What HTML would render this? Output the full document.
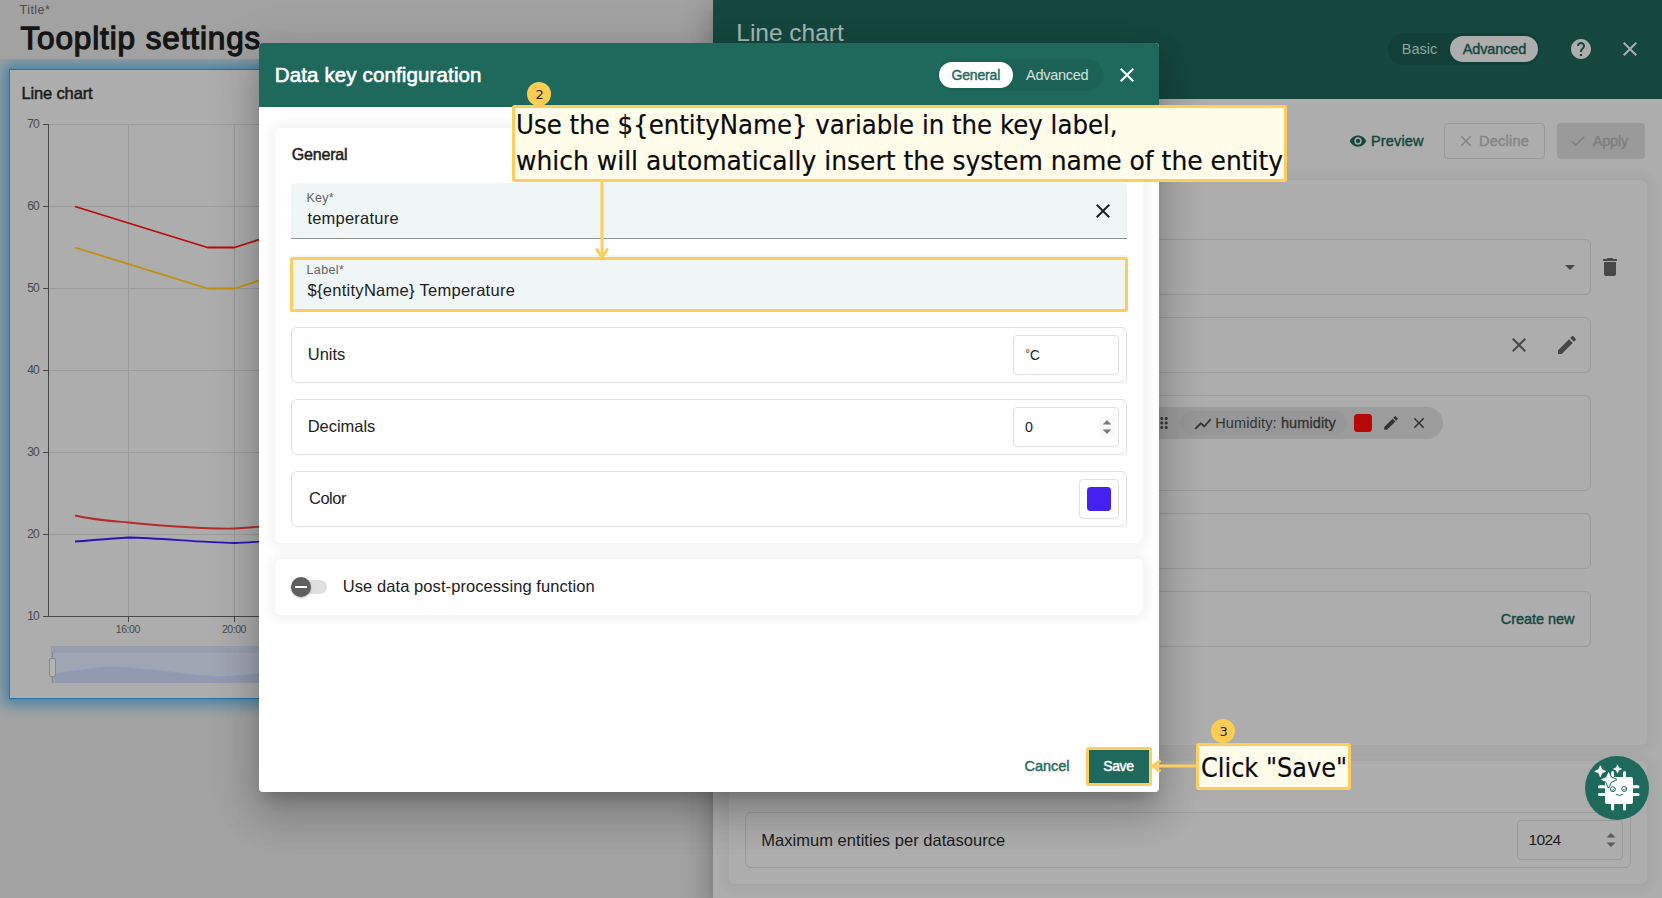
<!DOCTYPE html>
<html lang="en">
<head>
<meta charset="utf-8">
<title>Data key configuration</title>
<style>
*{box-sizing:border-box;margin:0;padding:0}
html,body{width:1662px;height:898px;overflow:hidden}
body{position:relative;background:#a2a2a2;font-family:"Liberation Sans",sans-serif;color:#1b1b1b;font-size:16px}
.a{position:absolute}
.t{position:absolute;white-space:nowrap;line-height:1}
svg{position:absolute;overflow:visible}
.b{font-weight:700}
.dv{font-family:"DejaVu Sans","Liberation Sans",sans-serif}
/* left page (behind backdrop) */
#widget{left:9px;top:10px;width:331px;height:629.5px;background:#adadad;border:1px solid #2b6fa3;box-shadow:0 0 13px 6px #4884a6}
/* right side panel */
#rp{left:713px;top:0;width:949px;height:898px;background:#adadad;box-shadow:0 8px 10px -5px rgba(0,0,0,.2),0 16px 24px 2px rgba(0,0,0,.14),0 6px 30px 5px rgba(0,0,0,.12)}
#rp-tool{left:713px;top:99px;width:949px;height:69px;background:#adadad}
#rp-head{left:713px;top:0;width:949px;height:99px;background:#15473f}
.rcard{background:#adadad;border-radius:6px;box-shadow:0 0 10px 6px rgba(7,12,35,.045)}
.rf{border:1px solid #9b9b9b;border-radius:6px}
/* dialog */
#dlg{left:259px;top:43px;width:900px;height:749px;background:#fff;border-radius:4px;box-shadow:0 11px 15px -7px rgba(0,0,0,.2),0 24px 38px 3px rgba(0,0,0,.14),0 9px 46px 8px rgba(0,0,0,.12)}
#dlg-head{left:259px;top:43px;width:900px;height:64px;background:#1f695c;border-radius:4px 4px 0 0}
.card{background:#fff;border-radius:6px;box-shadow:0 0 10px 6px rgba(11,17,51,.04)}
.row{border:1px solid #e0e0e0;border-radius:6px;background:#fff}
.inp{border:1px solid #e0e0e0;border-radius:4px;background:#fff}
.fld{background:#f0f5f5;border-radius:4px 4px 0 0;border-bottom:1px solid #8c8f8f}
/* annotations */
.note{background:#fffcea;border:3px solid #fdce5f;border-radius:2.5px}
.badge{width:24px;height:24px;border-radius:50%;background:#fdcd53}
</style>
</head>
<body>
<!-- ===== layer 1: dashboard page behind backdrop ===== -->
<div class="a" style="left:0;top:59px;width:700px;height:760px;overflow:hidden"><div class="a" id="widget"></div></div>
<svg width="1662" height="898" viewBox="0 0 1662 898" style="left:0;top:0">
  <g stroke="#9b9b9b" stroke-width="1" fill="none">
    <path d="M48 124.5H341M48 206.5H341M48 288.5H341M48 370.5H341M48 452.5H341M48 534.5H341"/>
    <path d="M128.5 124V616M234.5 124V616"/>
  </g>
  <g stroke="#474747" stroke-width="1" fill="none">
    <path d="M48.5 124V617M43 616.5H341"/>
    <path d="M43 124.5H48M43 206.5H48M43 288.5H48M43 370.5H48M43 452.5H48M43 534.5H48"/>
    <path d="M128.5 617V622M234.5 617V622"/>
  </g>
  <g fill="none" stroke-width="1.8" stroke-linejoin="round">
    <path d="M75 206.5L207.5 247.5L234.5 247.5L340 213.5" stroke="#b90a0c"/>
    <path d="M75 247.5L207.5 288.5L234.5 288.5L340 254.5" stroke="#c2900c"/>
    <path d="M75 515.5C95 520 105 520.5 128.5 522.5C165 526 200 529 234.5 528.5C250 528 262 526 340 520" stroke="#b32c2c"/>
    <path d="M75 541.5C95 540 110 538.5 128.5 537.5C160 538 200 542.5 234.5 543C250 543 262 541 340 536" stroke="#2c14b4"/>
  </g>
  <!-- data zoom -->
  <rect x="51" y="646" width="290" height="37" fill="#a0a5b3"/>
  <rect x="51" y="646" width="290" height="7" fill="#999eae"/>
  <path d="M55 673.5C75 671 95 668 109.5 666.7C150 668 190 676 224 676.7C240 676 250 674 341 665V683H55Z" fill="#9299af"/>
  <path d="M55 673.5C75 671 95 668 109.5 666.7C150 668 190 676 224 676.7C240 676 250 674 341 665" fill="none" stroke="#8d9dc2" stroke-width="1"/>
  <path d="M52.5 652V683" stroke="#868b9a" stroke-width="1.4"/>
  <rect x="49.5" y="658.5" width="6" height="18" rx="1.5" fill="#b3b3b3" stroke="#83878f" stroke-width="1"/>
</svg>

<div class="t" style="left:19.5px;top:4px;font-size:12.5px;color:#4b4b4b;letter-spacing:0.47px;">Title*</div>
<div class="t" style="left:20.4px;top:23px;font-size:31.5px;-webkit-text-stroke:1.26px #151515;color:#151515;letter-spacing:0.879px;">Toopltip settings</div>
<div class="t" style="left:21.5px;top:85px;font-size:16.5px;-webkit-text-stroke:0.49px #1b1b1b;color:#1b1b1b;letter-spacing:-0.153px;">Line chart</div>
<div class="t" style="left:27.3px;top:118px;font-size:12px;color:#4a4a4a;letter-spacing:-0.974px;">70</div>
<div class="t" style="left:27.3px;top:200px;font-size:12px;color:#4a4a4a;letter-spacing:-0.974px;">60</div>
<div class="t" style="left:27.3px;top:282px;font-size:12px;color:#4a4a4a;letter-spacing:-0.974px;">50</div>
<div class="t" style="left:27.3px;top:364px;font-size:12px;color:#4a4a4a;letter-spacing:-0.974px;">40</div>
<div class="t" style="left:27.3px;top:446px;font-size:12px;color:#4a4a4a;letter-spacing:-0.974px;">30</div>
<div class="t" style="left:27.3px;top:528px;font-size:12px;color:#4a4a4a;letter-spacing:-0.974px;">20</div>
<div class="t" style="left:27.3px;top:610px;font-size:12px;color:#4a4a4a;letter-spacing:-0.974px;">10</div>
<div class="t" style="left:115.75px;top:624px;font-size:10.5px;color:#4a4a4a;letter-spacing:-0.422px;">16:00</div>
<div class="t" style="left:222px;top:624px;font-size:10.5px;color:#4a4a4a;letter-spacing:-0.484px;">20:00</div>
<!-- ===== layer 2: widget edit side panel (behind backdrop) ===== -->
<div class="a" id="rp"></div>
<div class="a" id="rp-head"></div>
<div class="a rcard" style="left:729px;top:180px;width:918px;height:565px"></div>
<div class="a rcard" style="left:729px;top:761px;width:918px;height:123px"></div>
<div class="a" style="left:1388px;top:33px;width:152px;height:32px;border-radius:16px;background:#133f39"></div>
<div class="a" style="left:1450px;top:36px;width:88px;height:26px;border-radius:13px;background:#adadad"></div>
<svg width="24" height="24" viewBox="0 0 24 24" style="left:1569.4px;top:37px"><path fill="#adadad" d="M12 2C6.48 2 2 6.48 2 12s4.48 10 10 10 10-4.48 10-10S17.52 2 12 2zm1 17h-2v-2h2v2zm2.07-7.75l-.9.92C13.45 12.9 13 13.5 13 15h-2v-.5c0-1.1.45-2.1 1.17-2.83l1.24-1.26c.37-.36.59-.86.59-1.41 0-1.1-.9-2-2-2s-2 .9-2 2H8c0-2.21 1.79-4 4-4s4 1.79 4 4c0 .88-.36 1.68-.93 2.25z"/></svg>
<svg width="24" height="24" viewBox="0 0 24 24" style="left:1617.5px;top:37px"><path fill="#adadad" d="M19 6.41L17.59 5 12 10.59 6.41 5 5 6.41 10.59 12 5 17.59 6.41 19 12 13.41 17.59 19 19 17.59 13.41 12z"/></svg>
<!-- toolbar buttons -->
<svg width="18" height="18" viewBox="0 0 24 24" style="left:1348.6px;top:132px"><path fill="#15473f" d="M12 4.5C7 4.5 2.73 7.61 1 12c1.73 4.39 6 7.5 11 7.5s9.27-3.11 11-7.5c-1.73-4.39-6-7.5-11-7.5zM12 17c-2.76 0-5-2.24-5-5s2.24-5 5-5 5 2.24 5 5-2.24 5-5 5zm0-8c-1.66 0-3 1.34-3 3s1.34 3 3 3 3-1.34 3-3-1.34-3-3-3z"/></svg>
<div class="a" style="left:1444px;top:123px;width:101px;height:36px;border:1px solid #999;border-radius:4px"></div>
<svg width="18" height="18" viewBox="0 0 24 24" style="left:1456.5px;top:132px"><path fill="#868686" d="M19 6.41L17.59 5 12 10.59 6.41 5 5 6.41 10.59 12 5 17.59 6.41 19 12 13.41 17.59 19 19 17.59 13.41 12z"/></svg>
<div class="a" style="left:1557px;top:123px;width:88px;height:36px;background:#9a9a9a;border-radius:4px"></div>
<svg width="18" height="18" viewBox="0 0 24 24" style="left:1569px;top:132px"><path fill="#7f7f7f" d="M9 16.17L4.83 12l-1.42 1.41L9 19 21 7l-1.41-1.41z"/></svg>
<!-- form fields -->
<div class="a rf" style="left:745px;top:239px;width:846px;height:56px"></div>
<div class="a rf" style="left:745px;top:317px;width:846px;height:56px"></div>
<div class="a rf" style="left:745px;top:395px;width:846px;height:96px"></div>
<div class="a rf" style="left:745px;top:513px;width:846px;height:56px"></div>
<div class="a rf" style="left:745px;top:591px;width:846px;height:56px"></div>
<svg width="24" height="24" viewBox="0 0 24 24" style="left:1558px;top:255px"><path fill="#474747" d="M7 10l5 5 5-5z"/></svg>
<svg width="24" height="24" viewBox="0 0 24 24" style="left:1598.3px;top:255px"><path fill="#474747" d="M6 19c0 1.1.9 2 2 2h8c1.1 0 2-.9 2-2V7H6v12zM19 4h-3.5l-1-1h-5l-1 1H5v2h14V4z"/></svg>
<svg width="24" height="24" viewBox="0 0 24 24" style="left:1506.8px;top:333.2px"><path fill="#474747" d="M19 6.41L17.59 5 12 10.59 6.41 5 5 6.41 10.59 12 5 17.59 6.41 19 12 13.41 17.59 19 19 17.59 13.41 12z"/></svg>
<svg width="24" height="24" viewBox="0 0 24 24" style="left:1555.3px;top:333.2px"><path fill="#474747" d="M3 17.25V21h3.75L17.81 9.94l-3.75-3.75L3 17.25zM20.71 7.04c.39-.39.39-1.02 0-1.41l-2.34-2.34c-.39-.39-1.02-.39-1.41 0l-1.83 1.83 3.75 3.75 1.83-1.83z"/></svg>
<!-- data key chip -->
<div class="a" style="left:1130px;top:407px;width:313px;height:32px;border-radius:16px;background:#9c9c9c"></div>
<div class="a" style="left:1180px;top:411px;width:167px;height:24px;border-radius:12px;background:#979797"></div>
<svg width="18" height="18" viewBox="0 0 24 24" style="left:1155px;top:414.3px"><path fill="#3a3a3a" d="M11 18c0 1.1-.9 2-2 2s-2-.9-2-2 .9-2 2-2 2 .9 2 2zm-2-8c-1.1 0-2 .9-2 2s.9 2 2 2 2-.9 2-2-.9-2-2-2zm0-6c-1.1 0-2 .9-2 2s.9 2 2 2 2-.9 2-2-.9-2-2-2zm6 4c1.1 0 2-.9 2-2s-.9-2-2-2-2 .9-2 2 .9 2 2 2zm0 2c-1.1 0-2 .9-2 2s.9 2 2 2 2-.9 2-2-.9-2-2-2zm0 6c-1.1 0-2 .9-2 2s.9 2 2 2 2-.9 2-2-.9-2-2-2z"/></svg>
<svg width="20" height="20" viewBox="0 0 24 24" style="left:1192.6px;top:413.5px"><path fill="#333" d="M3.5 18.49l6-6.01 4 4L22 6.92l-1.41-1.41-7.09 7.97-4-4L2 16.99z"/></svg>
<div class="a" style="left:1354px;top:414px;width:18.3px;height:18.3px;border-radius:3.5px;background:#b50808"></div>
<svg width="18" height="18" viewBox="0 0 24 24" style="left:1382px;top:414.3px"><path fill="#333" d="M3 17.25V21h3.75L17.81 9.94l-3.75-3.75L3 17.25zM20.71 7.04c.39-.39.39-1.02 0-1.41l-2.34-2.34c-.39-.39-1.02-.39-1.41 0l-1.83 1.83 3.75 3.75 1.83-1.83z"/></svg>
<svg width="18" height="18" viewBox="0 0 24 24" style="left:1410px;top:413.8px"><path fill="#333" d="M19 6.41L17.59 5 12 10.59 6.41 5 5 6.41 10.59 12 5 17.59 6.41 19 12 13.41 17.59 19 19 17.59 13.41 12z"/></svg>
<!-- data settings row -->
<div class="a rf" style="left:745px;top:812px;width:886px;height:56px"></div>
<div class="a rf" style="left:1517px;top:820px;width:106px;height:40px;border-radius:4px"></div>
<svg width="10" height="16" viewBox="0 0 10 16" style="left:1605.7px;top:832px"><path fill="#5a5a5a" d="M0.5 5.5L5 1l4.5 4.5zM0.5 10.5L5 15l4.5-4.5z"/></svg>

<div class="t" style="left:736.3px;top:21px;font-size:24.5px;color:#a9b9b6;letter-spacing:-0.021px;">Line chart</div>
<div class="t" style="left:1401.75px;top:42px;font-size:14.5px;color:#8ea5a1;letter-spacing:0.011px;">Basic</div>
<div class="t" style="left:1462.75px;top:42px;font-size:14.5px;-webkit-text-stroke:0.43px #15473f;color:#15473f;letter-spacing:-0.133px;">Advanced</div>
<div class="t" style="left:1371px;top:134px;font-size:14.5px;-webkit-text-stroke:0.43px #15473f;color:#15473f;letter-spacing:0.15px;">Preview</div>
<div class="t" style="left:1479px;top:134px;font-size:14.5px;-webkit-text-stroke:0.43px #868686;color:#868686;letter-spacing:0.243px;">Decline</div>
<div class="t" style="left:1592.75px;top:134px;font-size:14.5px;-webkit-text-stroke:0.43px #7f7f7f;color:#7f7f7f;letter-spacing:-0.193px;">Apply</div>
<div class="t" style="left:1215.2px;top:416px;font-size:14.5px;color:#333;letter-spacing:0.124px;">Humidity: <span style="-webkit-text-stroke:.35px">humidity</span></div>
<div class="t" style="left:1500.75px;top:612px;font-size:14.5px;-webkit-text-stroke:0.43px #15473f;color:#15473f;letter-spacing:-0.048px;">Create new</div>
<div class="t" style="left:761.3px;top:832px;font-size:16.5px;color:#1b1b1b;letter-spacing:0.029px;">Maximum entities per datasource</div>
<div class="t" style="left:1528.4px;top:832px;font-size:15.5px;color:#1b1b1b;letter-spacing:-0.554px;">1024</div>
<!-- ===== layer 3: data key configuration dialog ===== -->
<div class="a" id="dlg"></div>
<div class="a" id="dlg-head"></div>
<div class="a" style="left:937px;top:59px;width:166px;height:32px;border-radius:16px;background:#1d6256"></div>
<div class="a" style="left:939px;top:62px;width:74px;height:26px;border-radius:13px;background:#fff"></div>
<svg width="24" height="24" viewBox="0 0 24 24" style="left:1115px;top:63px"><path fill="#fff" d="M19 6.41L17.59 5 12 10.59 6.41 5 5 6.41 10.59 12 5 17.59 6.41 19 12 13.41 17.59 19 19 17.59 13.41 12z"/></svg>
<div class="a card" style="left:275px;top:127.5px;width:868px;height:415px"></div>
<div class="a card" style="left:275px;top:559px;width:868px;height:56px"></div>
<!-- key field -->
<div class="a fld" style="left:291px;top:183px;width:836px;height:56px"></div>
<svg width="24" height="24" viewBox="0 0 24 24" style="left:1091.2px;top:199.2px"><path fill="#222" d="M19 6.41L17.59 5 12 10.59 6.41 5 5 6.41 10.59 12 5 17.59 6.41 19 12 13.41 17.59 19 19 17.59 13.41 12z"/></svg>
<!-- label field (highlighted) -->
<div class="a fld" style="left:291px;top:255px;width:836px;height:56px;border-bottom:0"></div>
<!-- rows -->
<div class="a row" style="left:291px;top:327px;width:836px;height:56px"></div>
<div class="a inp" style="left:1013px;top:335px;width:106px;height:40px"></div>
<div class="a row" style="left:291px;top:399px;width:836px;height:56px"></div>
<div class="a inp" style="left:1013px;top:407px;width:106px;height:40px"></div>
<div class="a" style="left:1099.5px;top:416.5px;width:15.5px;height:20.5px;background:#f9f9f9"></div>
<svg width="10" height="16" viewBox="0 0 10 16" style="left:1102.2px;top:418.9px"><path fill="#7d7d7d" d="M0.6 5.4L5 1l4.4 4.4zM0.6 10.6L5 15l4.4-4.4z"/></svg>
<div class="a row" style="left:291px;top:471px;width:836px;height:56px"></div>
<div class="a inp" style="left:1079px;top:479px;width:40px;height:40px"></div>
<div class="a" style="left:1087px;top:487px;width:24px;height:24px;border-radius:3.5px;background:#4421ee"></div>
<!-- slide toggle -->
<div class="a" style="left:295px;top:580px;width:31.5px;height:13.7px;border-radius:7px;background:#e0e0e0"></div>
<div class="a" style="left:291.2px;top:577.2px;width:20px;height:20px;border-radius:50%;background:#5f5f5f;box-shadow:0 1px 2px rgba(0,0,0,.28)"></div>
<div class="a" style="left:295.2px;top:586.3px;width:12px;height:1.8px;background:#fff"></div>
<!-- save button -->
<div class="a" style="left:1089px;top:750px;width:60px;height:33.5px;background:#1f695c"></div>

<div class="t" style="left:274.75px;top:65px;font-size:20.5px;-webkit-text-stroke:0.61px #fff;color:#fff;letter-spacing:0.132px;">Data key configuration</div>
<div class="t" style="left:951.4px;top:68px;font-size:14px;-webkit-text-stroke:0.42px #1f695c;color:#1f695c;letter-spacing:-0.149px;">General</div>
<div class="t" style="left:1026px;top:68px;font-size:14.5px;color:#d2e1de;letter-spacing:-0.261px;">Advanced</div>
<div class="t" style="left:291.75px;top:147px;font-size:16px;-webkit-text-stroke:0.48px #212121;color:#212121;letter-spacing:-0.186px;">General</div>
<div class="t" style="left:306.5px;top:192px;font-size:12.5px;color:#5f6363;letter-spacing:0.237px;">Key*</div>
<div class="t" style="left:307.4px;top:210px;font-size:16.5px;color:#212121;letter-spacing:0.222px;">temperature</div>
<div class="t" style="left:306.5px;top:264px;font-size:12.5px;color:#5f6363;letter-spacing:0.383px;">Label*</div>
<div class="t" style="left:307.5px;top:282px;font-size:16.5px;color:#212121;letter-spacing:0.284px;">${entityName} Temperature</div>
<div class="t" style="left:307.75px;top:346px;font-size:16.5px;color:#212121;letter-spacing:-0.023px;">Units</div>
<div class="t" style="left:307.75px;top:418px;font-size:16.5px;color:#212121;letter-spacing:-0.049px;">Decimals</div>
<div class="t" style="left:309px;top:490px;font-size:16.5px;color:#212121;letter-spacing:-0.484px;">Color</div>
<div class="t" style="left:342.75px;top:578px;font-size:16.5px;color:#212121;letter-spacing:0.077px;">Use data post-processing function</div>
<div class="t" style="left:1025.6px;top:347px;font-size:15.5px;color:#212121;letter-spacing:0px;"><span style="font-size:11px;position:relative;top:-3.4px;margin-right:.3px">°</span><span style="display:inline-block;transform:scaleX(.88);transform-origin:0 0">C</span></div>
<div class="t" style="left:1025.3px;top:419px;font-size:15.5px;color:#212121;letter-spacing:0px;transform:scaleX(.92);transform-origin:0 0;">0</div>
<div class="t" style="left:1024.5px;top:759px;font-size:14.5px;-webkit-text-stroke:0.43px #1f695c;color:#1f695c;letter-spacing:-0.033px;">Cancel</div>
<div class="t" style="left:1103.25px;top:759px;font-size:14px;-webkit-text-stroke:0.42px #fff;color:#fff;letter-spacing:-0.375px;">Save</div>
<!-- ===== layer 4: AI assistant button + tutorial annotations ===== -->
<svg width="64" height="64" viewBox="0 0 64 64" style="left:1585px;top:756px">
  <circle cx="32" cy="32" r="32" fill="#1f695c"/>
  <g stroke="#fff" stroke-width="3" stroke-linecap="round">
    <path d="M27.6 16.5V22M39.5 16.5V22M27.6 48V53M39.5 48V53M14.5 30.7H20M14.5 38.5H20M48 30.7H53M48 38.5H53"/>
  </g>
  <rect x="20" y="21" width="28" height="27" rx="2" fill="#fff"/>
  <path fill="#fff" stroke="#fff" stroke-width=".6" stroke-linejoin="round" d="M15.3 9.7L16.98 13.62L20.9 15.3L16.98 16.98L15.3 20.9L13.62 16.98L9.7 15.3L13.62 13.62Z"/>
  <path fill="#fff" stroke="#fff" stroke-width=".6" stroke-linejoin="round" d="M32.5 8.9L33.73 11.77L36.6 13L33.73 14.23L32.5 17.1L31.27 14.23L28.4 13L31.27 11.77Z"/>
  <path fill="#1f695c" stroke="#1f695c" stroke-width="2.4" stroke-linejoin="round" d="M23.6 16.4L25.76 21.44L30.8 23.6L25.76 25.76L23.6 30.8L21.44 25.76L16.4 23.6L21.44 21.44Z"/>
  <path fill="#fff" stroke="#fff" stroke-width=".6" stroke-linejoin="round" d="M23.6 16.4L25.76 21.44L30.8 23.6L25.76 25.76L23.6 30.8L21.44 25.76L16.4 23.6L21.44 21.44Z"/>
  <circle cx="27.9" cy="33.2" r="2.5" fill="#fff" stroke="#1f695c" stroke-width="1"/>
  <circle cx="39.2" cy="33" r="2.5" fill="#fff" stroke="#1f695c" stroke-width="1"/>
  <path d="M26.5 33.5l1.2 1 1.6-2M38 33.3l1.2 1 1.6-2" fill="none" stroke="#1f695c" stroke-width=".8"/>
  <path d="M31 38.5q3.4 2.2 6.8 0" fill="none" stroke="#1f695c" stroke-width="1" stroke-linecap="round"/>
</svg>
<!-- step 2 -->
<div class="a" style="left:290px;top:257px;width:838.3px;height:54.5px;border:3px solid #fdce5f;border-radius:2.5px"></div>
<div class="a note" style="left:511.5px;top:105px;width:775.5px;height:76.6px"></div>
<div class="a badge" style="left:527px;top:82.3px"></div>
<svg width="20" height="80" viewBox="0 0 20 80" style="left:592.3px;top:180px"><path d="M10 0V77M4.2 68.5L10 77.5L15.8 68.5" fill="none" stroke="#fdce5f" stroke-width="3" stroke-linejoin="miter"/></svg>
<!-- step 3 -->
<div class="a" style="left:1085.8px;top:746.7px;width:66.7px;height:39.5px;border:3px solid #fdce5f;border-radius:2.5px"></div>
<div class="a note" style="left:1196px;top:743px;width:154.5px;height:46.5px"></div>
<div class="a badge" style="left:1211px;top:719.3px"></div>
<svg width="50" height="20" viewBox="0 0 50 20" style="left:1150px;top:755.5px"><path d="M47 10H3M10.5 4.6L2.5 10L10.5 15.4" fill="none" stroke="#fdce5f" stroke-width="3"/></svg>

<div class="t" style="left:515.65px;top:112px;font-size:26.5px;font-family:'DejaVu Sans','Liberation Sans',sans-serif;color:#0a0a0a;letter-spacing:0px;-webkit-text-stroke:.2px #0a0a0a;transform:scaleX(0.924);transform-origin:0 0;">Use the ${entityName} variable in the key label,</div>
<div class="t" style="left:515.56px;top:148px;font-size:26.5px;font-family:'DejaVu Sans','Liberation Sans',sans-serif;color:#0a0a0a;letter-spacing:0px;-webkit-text-stroke:.2px #0a0a0a;transform:scaleX(0.9431);transform-origin:0 0;">which will automatically insert the system name of the entity</div>
<div class="t" style="left:1201.39px;top:755px;font-size:26.5px;font-family:'DejaVu Sans','Liberation Sans',sans-serif;color:#0a0a0a;letter-spacing:0px;-webkit-text-stroke:.2px #0a0a0a;transform:scaleX(0.9068);transform-origin:0 0;">Click "Save"</div>
<div class="t" style="left:535.5px;top:88px;font-size:13px;font-family:'DejaVu Sans','Liberation Sans',sans-serif;color:#222;letter-spacing:0px;">2</div>
<div class="t" style="left:1219.5px;top:725px;font-size:13px;font-family:'DejaVu Sans','Liberation Sans',sans-serif;color:#222;letter-spacing:0px;">3</div>

</body>
</html>
